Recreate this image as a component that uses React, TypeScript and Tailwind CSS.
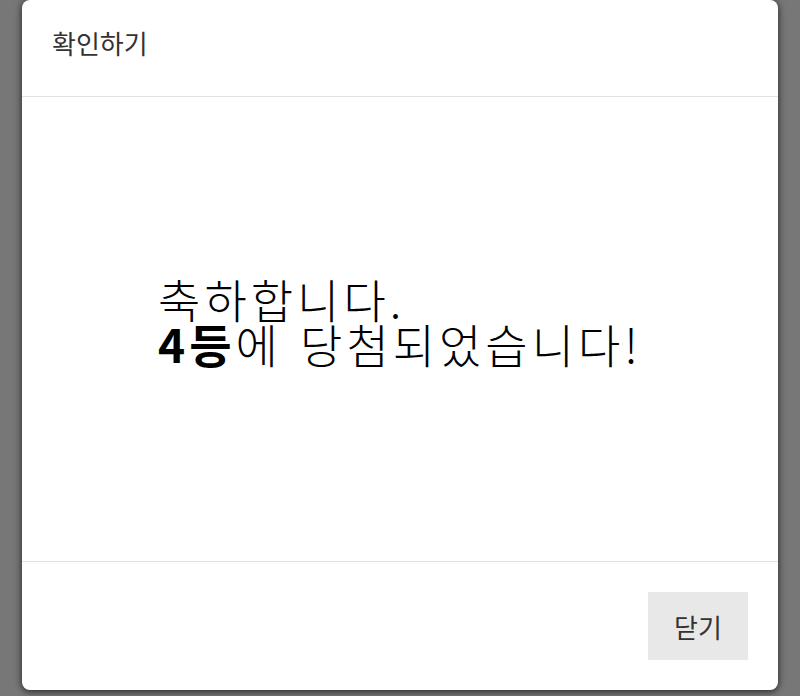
import React from "react";

export default function App() {
  return (
    <div
      className="w-[800px] h-[696px] bg-[#777777] overflow-hidden flex justify-center"
      style={{ fontFamily: '"Noto Sans CJK KR", "Noto Sans", sans-serif' }}
    >
      <div className="w-[756px] h-[690px] bg-white rounded-[8px] flex flex-col shadow-[0_2px_6px_rgba(0,0,0,0.45),0_0_8px_rgba(0,0,0,0.35)]">
        <div className="h-[97px] shrink-0 flex items-center px-[30px] border-b border-[#e2e2e2]">
          <span className="text-[26px] leading-none text-[#333333] -mt-[10px]">확인하기</span>
        </div>
        <div className="flex-1 flex items-center justify-center">
          <div className="text-[46px] leading-[45px] tracking-[4px] [word-spacing:4px] text-[#000000] font-light -mt-[16px]">
            축하합니다.
            <br />
            <span className="font-bold">4등</span>에 당첨되었습니다!
          </div>
        </div>
        <div className="h-[129px] shrink-0 border-t border-[#e2e2e2] flex items-center justify-end px-[30px]">
          <button className="w-[100px] h-[68px] bg-[#e8e8e8] text-[26px] text-[#333333]">닫기</button>
        </div>
      </div>
    </div>
  );
}
